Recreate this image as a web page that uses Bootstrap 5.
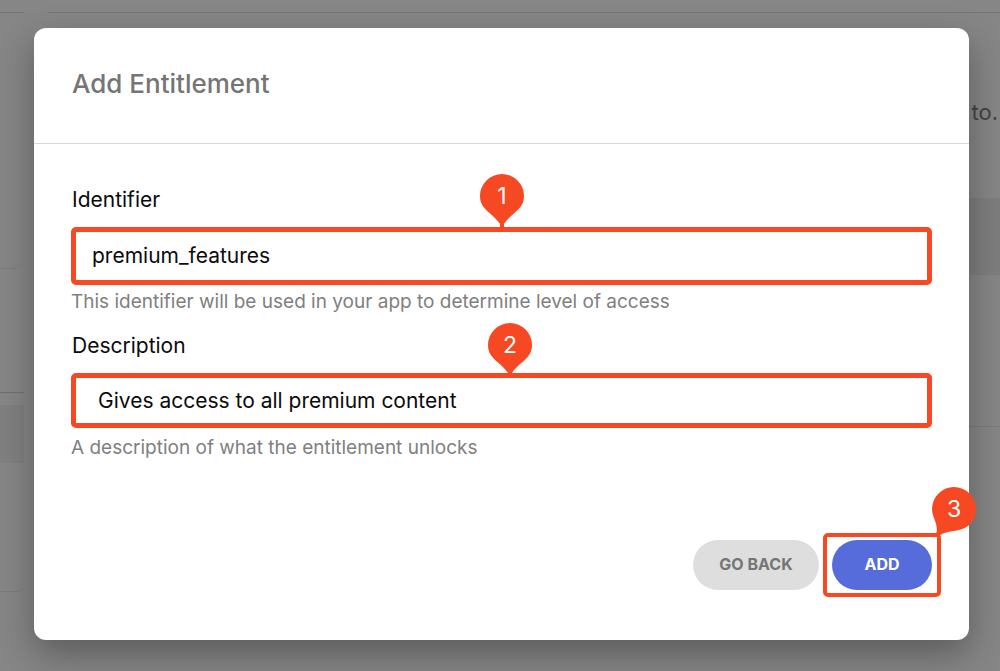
<!DOCTYPE html>
<html lang="en">
<head>
<meta charset="utf-8">
<meta name="viewport" content="width=device-width, initial-scale=1">
<title>Add Entitlement</title>
<link href="https://cdn.jsdelivr.net/npm/bootstrap@5.3.0/dist/css/bootstrap.min.css" rel="stylesheet">
<style>
  :root { --accent: #f64923; }
  body { font-family: Inter, "Liberation Sans", sans-serif; background: #868686; color: #0b0b0b; }

  /* dimmed page behind the dialog */
  .backpage { z-index: 0; }
  .rail { width: 24px; }
  .rail .strip, .sheet .strip { height: 13px; border-bottom: 1px solid #757575; }
  .rail-card { border-radius: 0 0 8px 0; background: #868686; border-bottom: 1px solid #7b7b7b; }
  .rail-first { width: 20px; height: 256px; }
  .rail-list { height: 88px; margin-top: 36px; border-bottom: 1px solid #707070; }
  .rail-active { height: 58px; margin-top: 12px; background: #808080; }
  .rail-last { height: 129px; }
  .sheet { margin-left: 24px; }
  .lede { font-size: 22px; line-height: 28px; color: #424242; padding: 85px 2px 72px 0; }
  .thead-band { height: 77px; background: #7e7e7e; }
  .trow-band { height: 152px; border-bottom: 1px solid #7b7b7b; }

  /* dialog */
  .stage { z-index: 1; padding: 28px 31px 31px 34px; }
  .dialog { border: 0; border-radius: 12px; box-shadow: 0 14px 36px rgba(0, 0, 0, .32); }
  .dialog-head { padding: 40px 38px 43px; border-bottom: 1px solid #d9d9d9; }
  .dialog-title { font-size: 26px; line-height: 32px; font-weight: 500; color: #757575; }
  .dialog-body { padding: 42px 37px 0; }
  .caption { font-size: 21px; line-height: 28px; margin-bottom: 13px; padding-left: 1px; }
  .box, .box:focus { height: 58px; border: 5px solid var(--accent); border-radius: 5px; padding: 0 16px 2px; font-size: 21px; color: #0b0b0b; box-shadow: none; }
  .box.box-low { height: 55px; padding: 0 22px; }
  .hint { font-size: 19px; line-height: 24px; color: #808080; margin-top: 5px; }
  .hint-low { margin-top: 8px; }
  .second { margin-top: 18px; }
  .dialog-foot { padding: 73px 28px 43px; gap: 4px; }
  .pill { height: 50px; border: 0; border-radius: 25px; font-size: 16px; font-weight: 700; padding: 0 0 2px; }
  .pill-back { width: 126px; background: #dedede; color: #757575; }
  .pill-add { width: 100px; background: #576cdb; color: #fff; }
  .framed { border: 4px solid var(--accent); border-radius: 5px; padding: 3px 5px; }

  /* numbered callouts */
  .pin { width: 44px; height: 54px; overflow: visible; left: 50%; bottom: 100%; margin: 0 0 -1px -22px; }
  .pin-low { left: 51%; margin-bottom: -4px; }
  .pin-corner { left: 100%; bottom: 100%; margin: 0 0 0 -5px; height: 50px; }
  .pin path { fill: var(--accent); }
  .pin text { fill: #fff; font-size: 23px; text-anchor: middle; }
</style>
</head>
<body class="position-relative min-vh-100">

<div class="backpage position-absolute top-0 bottom-0 start-0 end-0 d-flex overflow-hidden" aria-hidden="true">
  <div class="rail flex-shrink-0">
    <div class="strip"></div>
    <div class="rail-card rail-first"></div>
    <div class="rail-list"></div>
    <div class="rail-active"></div>
    <div class="rail-card rail-last"></div>
  </div>
  <div class="sheet flex-grow-1">
    <div class="strip"></div>
    <div class="lede text-end">to.</div>
    <div class="thead-band"></div>
    <div class="trow-band"></div>
  </div>
</div>

<main class="stage position-relative">
  <form class="card dialog" role="dialog" aria-labelledby="title">
    <div class="dialog-head">
      <h1 class="dialog-title mb-0" id="title">Add Entitlement</h1>
    </div>
    <div class="dialog-body">
      <div>
        <label class="caption d-block" for="identifier">Identifier</label>
        <div class="position-relative">
          <input class="form-control box" id="identifier" type="text" value="premium_features">
          <svg class="pin position-absolute" viewBox="0 0 44 54" aria-hidden="true">
            <path d="M22 0A22 22 0 0 1 44 22C44 36 32 38 24 50L24 54H20L20 50C12 38 0 36 0 22A22 22 0 0 1 22 0Z"/>
            <text x="22" y="30">1</text>
          </svg>
        </div>
        <div class="hint">This identifier will be used in your app to determine level of access</div>
      </div>
      <div class="second">
        <label class="caption d-block" for="description">Description</label>
        <div class="position-relative">
          <input class="form-control box box-low" id="description" type="text" value="Gives access to all premium content">
          <svg class="pin pin-low position-absolute" viewBox="0 0 44 54" aria-hidden="true">
            <path d="M22 0A22 22 0 0 1 44 22C44 36 32 38 24 50L24 54H20L20 50C12 38 0 36 0 22A22 22 0 0 1 22 0Z"/>
            <text x="22" y="30">2</text>
          </svg>
        </div>
        <div class="hint hint-low">A description of what the entitlement unlocks</div>
      </div>
    </div>
    <div class="dialog-foot d-flex justify-content-end align-items-center">
      <button class="btn pill pill-back" type="button">GO BACK</button>
      <div class="framed position-relative">
        <button class="btn pill pill-add d-block" type="button">ADD</button>
        <svg class="pin pin-corner position-absolute" viewBox="0 0 44 50" aria-hidden="true">
          <path d="M22 0A22 22 0 0 1 44 22C44 34 36 41 27 43C17 45 11 45 6 50L4 47C6 42 4 36 2 31A22 22 0 0 1 22 0Z"/>
          <text x="22" y="30">3</text>
        </svg>
      </div>
    </div>
  </form>
</main>

<script src="https://cdn.jsdelivr.net/npm/bootstrap@5.3.0/dist/js/bootstrap.bundle.min.js"></script>
</body>
</html>
